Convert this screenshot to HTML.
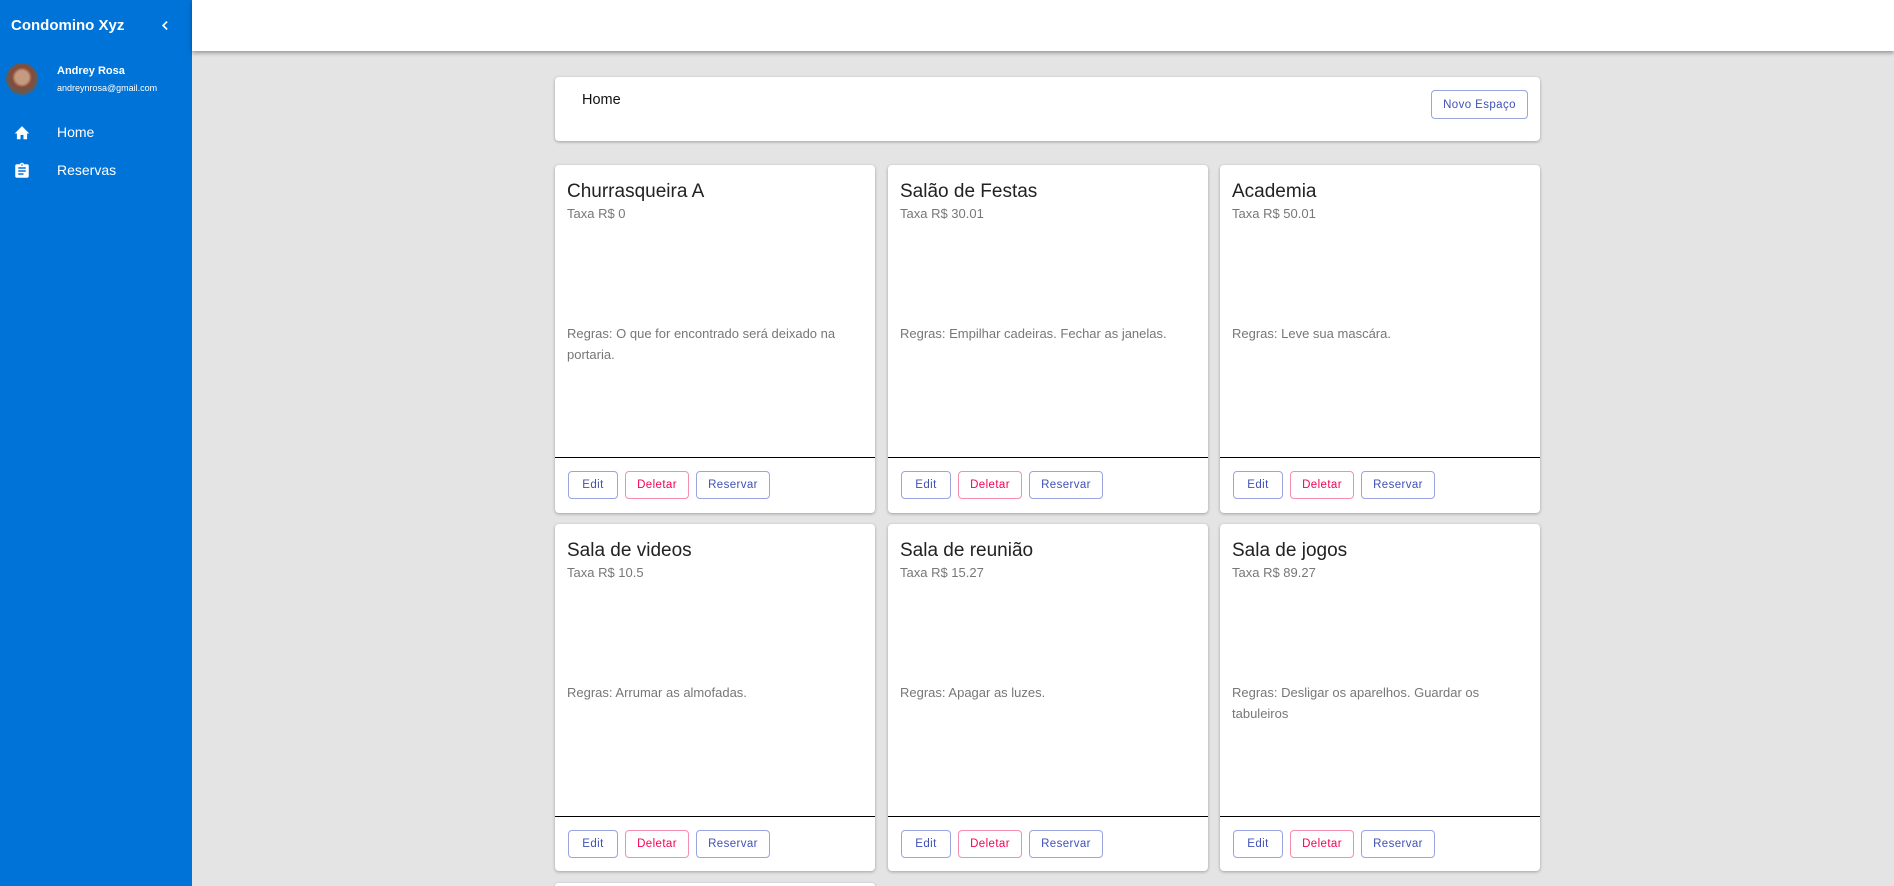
<!DOCTYPE html>
<html style="overflow:hidden;height:886px"><head><meta charset="utf-8"><style>
*{box-sizing:border-box;margin:0;padding:0}
body{width:1894px;height:886px;overflow:hidden;background:#e4e4e4;font-family:"Liberation Sans",Arial,sans-serif;position:relative}
.side{position:absolute;left:0;top:0;width:192px;height:886px;background:#0073d8;color:#fff}
.bar{position:absolute;left:192px;top:0;right:0;height:51px;background:#fff;box-shadow:0 2px 4px rgba(0,0,0,.35)}
.card{position:absolute;background:#fff;border-radius:4px;box-shadow:0 1px 3px rgba(0,0,0,.3)}
.t{position:absolute;left:12px;top:16px;font-size:19px;color:#222}
.x{position:absolute;left:12px;top:41px;font-size:13px;color:#777}
.r{position:absolute;left:12px;top:158px;width:290px;font-size:13px;line-height:21px;color:#777}
.ln{position:absolute;left:0;right:0;top:292px;border-top:1.5px solid #000}
.b{position:absolute;top:306px;height:28px;border:1px solid #9ba3e0;border-radius:4px;color:#3f51b5;font-size:11.5px;letter-spacing:.4px;display:flex;align-items:center;justify-content:center}
.b.d{border-color:#f48fb1;color:#f50057}
</style></head><body>
<div class="side">
<div style="position:absolute;left:11px;top:17px;font-size:15px;font-weight:bold">Condomino Xyz</div>
<svg style="position:absolute;left:160px;top:20px" width="11" height="11" viewBox="0 0 14 14"><path d="M9 2 L4 7 L9 12" stroke="#fff" stroke-width="2.2" fill="none"/></svg>
<div style="position:absolute;left:6px;top:63px;width:32px;height:32px;border-radius:50%;background:radial-gradient(circle at 50% 45%,#c49a80 0 28%,#8a4a34 42%,#4a6470 75%);"></div>
<div style="position:absolute;left:57px;top:65px;font-size:11px;font-weight:bold">Andrey Rosa</div>
<div style="position:absolute;left:57px;top:83px;font-size:9px">andreynrosa@gmail.com</div>
<svg style="position:absolute;left:13px;top:124px" width="18" height="16" viewBox="0 0 24 22"><path d="M10 21v-6h4v6h5v-8h3L12 3 2 13h3v8z" fill="#fff"/></svg>
<div style="position:absolute;left:57px;top:124px;font-size:14px">Home</div>
<svg style="position:absolute;left:13px;top:161px" width="18" height="20" viewBox="0 0 24 24"><path d="M19 3h-4.2C14.4 1.8 13.3 1 12 1s-2.4.8-2.8 2H5c-1.1 0-2 .9-2 2v14c0 1.100.9 2 2 2h14c1.1 0 2-.9 2-2V5c0-1.1-.9-2-2-2zm-7 0c.55 0 1 .45 1 1s-.45 1-1 1-1-.45-1-1 .45-1 1-1zm2 14H7v-2h7v2zm3-4H7v-2h10v2zm0-4H7V7h10v2z" fill="#fff"/></svg>
<div style="position:absolute;left:57px;top:162px;font-size:14px">Reservas</div>
</div>
<div class="bar"></div>
<div class="card" style="left:555px;top:77px;width:985px;height:64px">
<div style="position:absolute;left:27px;top:15px;font-size:14.5px;color:#111">Home</div>
<div class="b" style="left:876px;top:13px;width:97px;height:29px;font-size:11.5px">Novo Espaço</div>
</div>
<div class="card" style="left:555px;top:165px;width:320px;height:348px"><div class="t">Churrasqueira A</div><div class="x">Taxa R$ 0</div><div class="r">Regras: O que for encontrado será deixado na portaria.</div><div class="ln"></div><div class="b" style="left:13px;width:50px">Edit</div><div class="b d" style="left:70px;width:64px">Deletar</div><div class="b" style="left:141px;width:74px">Reservar</div></div>
<div class="card" style="left:888px;top:165px;width:320px;height:348px"><div class="t">Salão de Festas</div><div class="x">Taxa R$ 30.01</div><div class="r">Regras: Empilhar cadeiras. Fechar as janelas.</div><div class="ln"></div><div class="b" style="left:13px;width:50px">Edit</div><div class="b d" style="left:70px;width:64px">Deletar</div><div class="b" style="left:141px;width:74px">Reservar</div></div>
<div class="card" style="left:1220px;top:165px;width:320px;height:348px"><div class="t">Academia</div><div class="x">Taxa R$ 50.01</div><div class="r">Regras: Leve sua mascára.</div><div class="ln"></div><div class="b" style="left:13px;width:50px">Edit</div><div class="b d" style="left:70px;width:64px">Deletar</div><div class="b" style="left:141px;width:74px">Reservar</div></div>
<div class="card" style="left:555px;top:524px;width:320px;height:347px"><div class="t">Sala de videos</div><div class="x">Taxa R$ 10.5</div><div class="r">Regras: Arrumar as almofadas.</div><div class="ln"></div><div class="b" style="left:13px;width:50px">Edit</div><div class="b d" style="left:70px;width:64px">Deletar</div><div class="b" style="left:141px;width:74px">Reservar</div></div>
<div class="card" style="left:888px;top:524px;width:320px;height:347px"><div class="t">Sala de reunião</div><div class="x">Taxa R$ 15.27</div><div class="r">Regras: Apagar as luzes.</div><div class="ln"></div><div class="b" style="left:13px;width:50px">Edit</div><div class="b d" style="left:70px;width:64px">Deletar</div><div class="b" style="left:141px;width:74px">Reservar</div></div>
<div class="card" style="left:1220px;top:524px;width:320px;height:347px"><div class="t">Sala de jogos</div><div class="x">Taxa R$ 89.27</div><div class="r">Regras: Desligar os aparelhos. Guardar os tabuleiros</div><div class="ln"></div><div class="b" style="left:13px;width:50px">Edit</div><div class="b d" style="left:70px;width:64px">Deletar</div><div class="b" style="left:141px;width:74px">Reservar</div></div>
<div class="card" style="left:555px;top:883px;width:320px;height:3px;border-radius:4px 4px 0 0"></div>
</body></html>
